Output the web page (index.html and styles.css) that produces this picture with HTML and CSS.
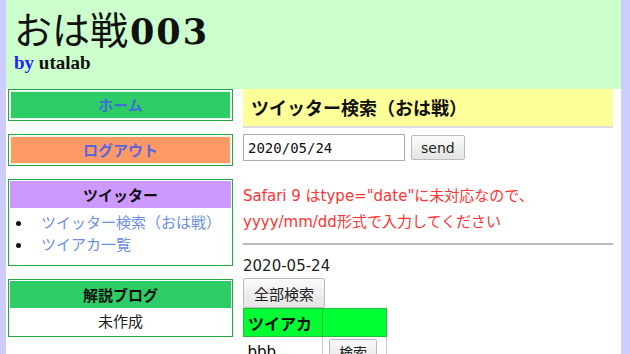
FILE: index.html
```html
<!DOCTYPE html>
<html>
<head>
    <meta charset="UTF-8">
    <title>おは戦003</title>
    <link rel="stylesheet" href="styles.css">
</head>
<body>
<div class="wrap">
    <div class="header">
        <h1>おは戦<span class="num">003</span></h1>
        <p class="by"><span>by</span> utalab</p>
    </div>
    <div class="cols">
        <div class="side">
            <div class="box"><a class="btn home" href="javascript:;">ホーム</a></div>
            <div class="box"><a class="btn logout" href="javascript:;">ログアウト</a></div>
            <div class="box">
                <div class="box-title purple">ツイッター</div>
                <ul class="links">
                    <li><a href="javascript:;">ツイッター検索（おは戦）</a></li>
                    <li><a href="javascript:;">ツイアカ一覧</a></li>
                </ul>
            </div>
            <div class="box">
                <div class="box-title green">解説ブログ</div>
                <p class="note">未作成</p>
            </div>
        </div>
        <div class="main">
            <h2>ツイッター検索（おは戦）</h2>
            <form class="search">
                <input type="text" value="2020/05/24"/>
                <button type="button">send</button>
            </form>
            <p class="warn">Safari 9 はtype="date"に未対応なので、<br>yyyy/mm/dd形式で入力してください</p>
            <hr>
            <p class="date">2020-05-24</p>
            <button type="button" class="all">全部検索</button>
            <table class="accounts">
                <tr><th>ツイアカ</th><th></th></tr>
                <tr><td>bbb</td><td><button type="button">検索</button></td></tr>
            </table>
        </div>
    </div>
</div>
</body>
</html>
```

FILE: styles.css
```css
* {
    margin: 0;
    padding: 0;
}

body {
    background: #ccccff;
    font-family: "Noto Sans CJK JP", sans-serif;
    font-size: 15px;
}

a {
    text-decoration: none;
}

ul, li {
    list-style: none;
}

.wrap {
    margin-left: 6px;
    width: 615px;
    min-height: 354px;
    background: #fff;
}

.header {
    height: 89px;
    padding-left: 8px;
    background: #ccffcc;
    font-family: "Liberation Serif", "Noto Sans CJK JP", serif;
}

.header h1 {
    padding-top: 9px;
    height: 44px;
    line-height: 44px;
    font-size: 38px;
    font-weight: normal;
    color: #111;
}

.header h1 .num {
    margin-left: 2px;
    letter-spacing: 2px;
    font-family: "DejaVu Serif", serif;
    font-weight: bold;
    font-size: 35px;
}

.header .by {
    font-size: 19px;
    font-weight: bold;
    line-height: 20px;
    color: #111;
}

.header .by span {
    color: #2222ff;
}

.cols {
    display: flex;
    gap: 10px;
    padding-left: 2px;
}

.side {
    width: 225px;
}

.box {
    margin-bottom: 13px;
    padding: 1px;
    border: 1px solid #22a844;
    background: #fff;
}

.btn {
    display: block;
    height: 26px;
    line-height: 26px;
    text-align: center;
    font-weight: bold;
    font-size: 15px;
    border: 1px solid #e6f5e6;
}

.btn.home {
    background: #2ecc66;
    color: #3d6fd6;
}

.btn.logout {
    background: #ff9966;
    color: #5a66e0;
}

.box-title {
    height: 27px;
    line-height: 27px;
    text-align: center;
    font-weight: bold;
    font-size: 15px;
    color: #111;
}

.box-title.purple {
    background: #cc99ff;
}

.box-title.green {
    background: #2ecc66;
}

.links {
    padding: 3px 0 9px 5px;
}

.links li {
    position: relative;
    padding-left: 26px;
    height: 22px;
    line-height: 22px;
}

.links li:before {
    content: "";
    position: absolute;
    left: 1px;
    top: 10px;
    width: 5px;
    height: 5px;
    border-radius: 50%;
    background: #111;
}

.links a {
    color: #6f8fe0;
}

.note {
    height: 27px;
    line-height: 25px;
    text-align: center;
    color: #222;
}

.main {
    width: 370px;
}

.main h2 {
    height: 37px;
    line-height: 36px;
    padding-left: 8px;
    background: #ffff99;
    border-bottom: 2px solid #dddddd;
    font-size: 18px;
    color: #111;
}

.search {
    display: flex;
    gap: 6px;
    margin-top: 6px;
    align-items: center;
}

.search input {
    width: 162px;
    height: 27px;
    box-sizing: border-box;
    padding: 0 4px;
    border: 1px solid #aaa;
    font-family: "DejaVu Sans Mono", monospace;
    font-size: 14px;
    color: #111;
    outline: none;
}

.search button, .all, .accounts button {
    height: 25px;
    padding: 0 9px;
    border: 1px solid #bbb;
    border-radius: 2px;
    background: linear-gradient(#fafafa, #e4e4e4);
    font-family: "DejaVu Sans", "Noto Sans CJK JP", sans-serif;
    font-size: 14px;
    color: #222;
}

.warn {
    margin-top: 22px;
    line-height: 26px;
    color: #ff3333;
    font-family: "DejaVu Sans", "Noto Sans CJK JP", sans-serif;
    font-size: 15px;
}

.main hr {
    margin-top: 8px;
    border: 0;
    border-top: 2px solid #bbb;
}

.date {
    margin-top: 10px;
    line-height: 22px;
    font-family: "DejaVu Sans", "Noto Sans CJK JP", sans-serif;
    font-size: 15px;
    color: #222;
}

.all {
    display: block;
    margin-top: 1px;
    height: 30px;
    padding: 0 10px;
    font-family: "Noto Sans CJK JP", sans-serif;
    font-size: 15px;
}

.accounts {
    border-collapse: collapse;
}

.accounts th {
    width: 70px;
    height: 27px;
    padding: 0 4px;
    text-align: left;
    background: #00ff33;
    border: 1px solid #22bb33;
    font-size: 16px;
    color: #111;
}

.accounts th + th {
    width: 55px;
}

.accounts td {
    height: 30px;
    padding: 0 4px;
    border-right: 1px solid #ccc;
    font-family: "DejaVu Sans", sans-serif;
}

.accounts td button {
    margin-left: 2px;
    height: 26px;
    font-family: "Noto Sans CJK JP", sans-serif;
}
```
